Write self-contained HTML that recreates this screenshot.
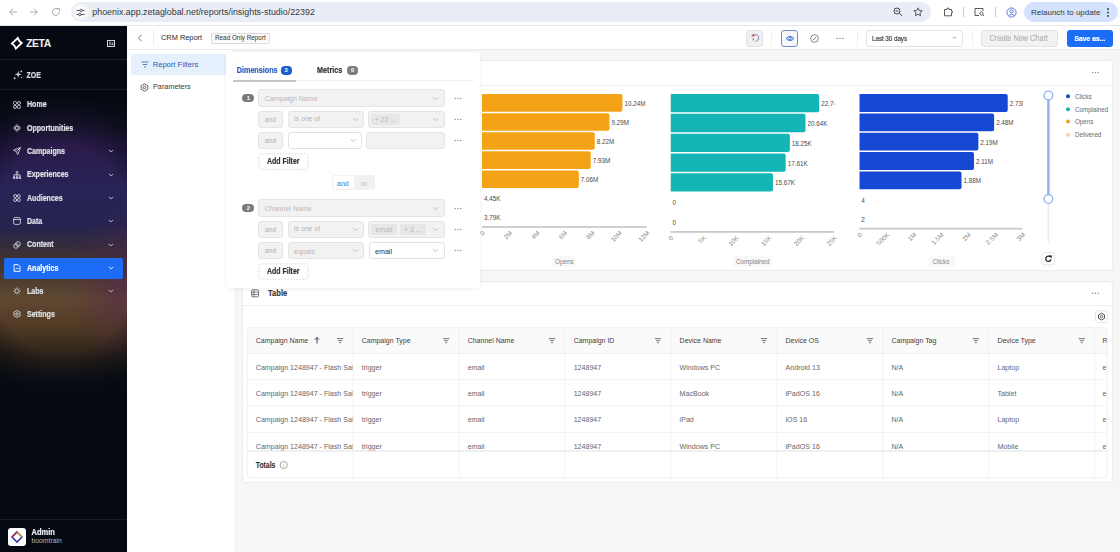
<!DOCTYPE html>
<html><head><meta charset="utf-8"><style>
*{box-sizing:border-box;margin:0;padding:0}
html,body{width:1120px;height:552px;overflow:hidden;background:#f6f6f7;font-family:"Liberation Sans",sans-serif;color:#333}
.a{position:absolute}
.t{position:absolute;white-space:nowrap;line-height:1}
</style></head><body>
<div class="a" style="left:0;top:0;width:1120px;height:26px;background:#fff;border-bottom:1px solid #e6e6e6"></div>
<div class="a" style="left:71px;top:2px;width:860px;height:20px;background:#e9eef6;border-radius:10px;"></div>
<svg class="a" style="left:8px;top:7px" width="10" height="10" viewBox="0 0 10 10"><path d="M9 5H1.8M5 1.6L1.6 5L5 8.4" fill="none" stroke="#a7aaae" stroke-width="1"/></svg>
<svg class="a" style="left:29px;top:7px" width="10" height="10" viewBox="0 0 10 10"><path d="M1 5H8.2M5 1.6L8.4 5L5 8.4" fill="none" stroke="#a7aaae" stroke-width="1"/></svg>
<svg class="a" style="left:50.5px;top:7px" width="10" height="10" viewBox="0 0 10 10"><path d="M8.2 5.2A3.4 3.4 0 1 1 7.1 2.4" fill="none" stroke="#a7aaae" stroke-width="1"/><path d="M5.6 1.6H8.4V4.4" fill="none" stroke="#a7aaae" stroke-width="1"/></svg>
<div class="a" style="left:72.5px;top:4px;width:16px;height:16px;background:#f5f7fb;border-radius:8px;"></div>
<svg class="a" style="left:76px;top:7.5px" width="9" height="9" viewBox="0 0 9 9"><path d="M0.5 2.5H4M6.5 2.5H8.5M0.5 6.5H2.5M5 6.5H8.5" stroke="#474747" stroke-width="0.9"/><circle cx="5.2" cy="2.5" r="1.2" fill="none" stroke="#474747" stroke-width="0.9"/><circle cx="3.8" cy="6.5" r="1.2" fill="none" stroke="#474747" stroke-width="0.9"/></svg>
<div class="t" style="left:92.3px;top:7.75px;font-size:8.9px;color:#363636;">phoenix.app.zetaglobal.net/reports/insights-studio/22392</div>
<svg class="a" style="left:893px;top:7px" width="10" height="10" viewBox="0 0 10 10"><circle cx="4" cy="4" r="3" fill="none" stroke="#474747" stroke-width="1"/><path d="M6.2 6.2L9 9M2.6 4h2.8" stroke="#474747" stroke-width="1"/></svg>
<svg class="a" style="left:913px;top:6.5px" width="10" height="10" viewBox="0 0 10 10"><path d="M5 0.8L6.2 3.6L9.2 3.8L6.9 5.8L7.6 8.8L5 7.2L2.4 8.8L3.1 5.8L0.8 3.8L3.8 3.6Z" fill="none" stroke="#474747" stroke-width="0.9"/></svg>
<svg class="a" style="left:943px;top:7px" width="10" height="10" viewBox="0 0 10 10"><path d="M1.5 2.5H4V1.2H6V2.5H8.5V4.2H9.3V6H8.5V8.8H1.5Z" fill="none" stroke="#474747" stroke-width="0.9"/></svg>
<div class="a" style="left:963px;top:7px;width:1px;height:10px;background:#c7c9cc;border-radius:0px;"></div>
<svg class="a" style="left:974px;top:7px" width="11" height="10" viewBox="0 0 11 10"><path d="M1 1.5H9V4M1 1.5V8.5H5" fill="none" stroke="#474747" stroke-width="0.9"/><circle cx="7.5" cy="6.5" r="1.6" fill="none" stroke="#474747" stroke-width="0.9"/><path d="M8.6 7.6L10 9" stroke="#474747" stroke-width="0.9"/></svg>
<div class="a" style="left:995px;top:7px;width:1px;height:10px;background:#c7c9cc;border-radius:0px;"></div>
<svg class="a" style="left:1006px;top:6.5px" width="11" height="11" viewBox="0 0 11 11"><circle cx="5.5" cy="5.5" r="4.6" fill="none" stroke="#4c6fd0" stroke-width="0.9"/><circle cx="5.5" cy="4.3" r="1.6" fill="none" stroke="#4c6fd0" stroke-width="0.9"/><path d="M2.6 8.6Q5.5 5.8 8.4 8.6" fill="none" stroke="#4c6fd0" stroke-width="0.9"/></svg>
<div class="a" style="left:1024px;top:2px;width:94px;height:19.5px;background:#d3e3fd;border-radius:10px;"></div>
<div class="t" style="left:1031px;top:8.6px;font-size:8px;color:#3a3a3a;">Relaunch to update</div>
<svg class="a" style="left:1106px;top:6.5px" width="4" height="11" viewBox="0 0 4 11"><circle cx="2" cy="2" r="0.9" fill="#333"/><circle cx="2" cy="5.5" r="0.9" fill="#333"/><circle cx="2" cy="9" r="0.9" fill="#333"/></svg>
<div class="a" style="left:0;top:26px;width:127px;height:526px;background:#050a12;overflow:hidden">
<div class="a" style="left:0;top:74px;width:127px;height:290px;background:linear-gradient(to bottom, #0d0f1c 0px, #1c1530 20px, #2b1b4a 45px, #282457 90px, #25234f 125px, #3e3330 160px, #604832 200px, #4f3a23 228px, #2c2219 255px, #0a0d15 285px);-webkit-mask-image:radial-gradient(ellipse 125px 170px at 62px 150px, #000 62%, rgba(0,0,0,0) 100%);mask-image:radial-gradient(ellipse 125px 170px at 62px 150px, #000 62%, rgba(0,0,0,0) 100%)"></div>
<div class="a" style="left:0;top:74px;width:127px;height:290px;background:radial-gradient(ellipse 55px 80px at 125px 185px, rgba(85,35,80,0.55), rgba(85,35,80,0) 100%)"></div>
<div class="a" style="left:0px;top:33px;width:127px;height:1px;background:#17202c;border-radius:0px;"></div>
<div class="a" style="left:0px;top:63px;width:127px;height:1px;background:#161e2c;border-radius:0px;"></div>
<div class="a" style="left:0px;top:493px;width:127px;height:1px;background:#161c26;border-radius:0px;"></div>
<svg class="a" style="left:9px;top:9px" width="16" height="16" viewBox="0 0 16 16"><path d="M8.8 3.1 Q9.8 6.5 12.7 8.05 L6.9 13.6 Q5.9 10.2 2.95 8.5 Z" fill="none" stroke="#fff" stroke-width="1.9" stroke-linejoin="miter"/></svg>
<div class="t" style="left:26px;top:12.51px;font-size:10.4px;color:#f2f2f2;font-weight:bold;letter-spacing:-0.4px;">ZETA</div>
<svg class="a" style="left:107px;top:14px" width="8" height="7" viewBox="0 0 8 7"><rect x="0.5" y="0.5" width="7" height="6" fill="none" stroke="#cfd2d8" stroke-width="1"/><rect x="2.5" y="1.5" width="1" height="4" fill="#cfd2d8"/><rect x="4.5" y="2.5" width="2" height="1" fill="#cfd2d8"/><rect x="4.5" y="4" width="2" height="1" fill="#cfd2d8"/></svg>
<svg class="a" style="left:12.5px;top:44px" width="10" height="10" viewBox="0 0 10 10"><g fill="#c9ccd2"><path d="M5.2 0.8 L6 3.6 L8.8 4.4 L6 5.2 L5.2 8 L4.4 5.2 L1.6 4.4 L4.4 3.6Z"/><circle cx="8.3" cy="1.4" r="0.9"/><circle cx="1.6" cy="8.2" r="1"/><circle cx="8.4" cy="7.6" r="0.7"/></g></svg>
<div class="t" style="left:26.6px;top:45.51px;font-size:7px;color:#d8dade;font-weight:bold;transform:scaleY(1.18);transform-origin:0 3.29px;-webkit-text-stroke:0.18px #d8dade;">ZOE</div>
<svg class="a" style="left:13px;top:74.5px" width="8" height="8" viewBox="0 0 8 8"><g fill="none" stroke="#d0d3d8" stroke-width="0.9"><rect x="0.6" y="0.6" width="2.9" height="2.9" rx="0.8"/><circle cx="6" cy="2" r="1.5"/><circle cx="2" cy="6" r="1.5"/><rect x="4.5" y="4.5" width="2.9" height="2.9" rx="0.8"/></g></svg>
<div class="t" style="left:27px;top:75.39px;font-size:7.05px;color:#e0e2e6;font-weight:bold;transform:scaleY(1.18);transform-origin:0 3.31px;-webkit-text-stroke:0.18px #e0e2e6;">Home</div>
<svg class="a" style="left:13px;top:98px" width="8" height="8" viewBox="0 0 8 8"><g fill="none" stroke="#d0d3d8" stroke-width="0.9"><path d="M4 0.5L7.5 4L4 7.5L0.5 4Z"/><circle cx="4" cy="4" r="1.6"/></g></svg>
<div class="t" style="left:27px;top:98.89px;font-size:7.05px;color:#e0e2e6;font-weight:bold;transform:scaleY(1.18);transform-origin:0 3.31px;-webkit-text-stroke:0.18px #e0e2e6;">Opportunities</div>
<svg class="a" style="left:13px;top:121px" width="8" height="8" viewBox="0 0 8 8"><g fill="none" stroke="#d0d3d8" stroke-width="0.9"><path d="M7.5 0.5L0.5 3.2L3.3 4.7L4.8 7.5Z M7.5 0.5L3.3 4.7"/></g></svg>
<div class="t" style="left:27px;top:121.89px;font-size:7.05px;color:#e0e2e6;font-weight:bold;transform:scaleY(1.18);transform-origin:0 3.31px;-webkit-text-stroke:0.18px #e0e2e6;">Campaigns</div>
<svg class="a" style="left:107.5px;top:123.3px" width="6" height="4" viewBox="0 0 6 4"><path d="M0.8 1 L3 2.8 L5.2 1" fill="none" stroke="#b4b8c0" stroke-width="0.95"/></svg>
<svg class="a" style="left:13px;top:144.5px" width="8" height="8" viewBox="0 0 8 8"><g fill="none" stroke="#d0d3d8" stroke-width="0.9"><circle cx="4" cy="1.2" r="0.9"/><path d="M4 2.1V3.8M1 6V3.8H7V6M4 3.8V6"/><rect x="0.3" y="6" width="1.4" height="1.4"/><rect x="3.3" y="6" width="1.4" height="1.4"/><rect x="6.3" y="6" width="1.4" height="1.4"/></g></svg>
<div class="t" style="left:27px;top:145.39px;font-size:7.05px;color:#e0e2e6;font-weight:bold;transform:scaleY(1.18);transform-origin:0 3.31px;-webkit-text-stroke:0.18px #e0e2e6;">Experiences</div>
<svg class="a" style="left:107.5px;top:146.8px" width="6" height="4" viewBox="0 0 6 4"><path d="M0.8 1 L3 2.8 L5.2 1" fill="none" stroke="#b4b8c0" stroke-width="0.95"/></svg>
<svg class="a" style="left:13px;top:168px" width="8" height="8" viewBox="0 0 8 8"><g fill="none" stroke="#d0d3d8" stroke-width="0.9"><circle cx="2.2" cy="2" r="1.5"/><circle cx="5.8" cy="2" r="1.5"/><circle cx="2.2" cy="6" r="1.5"/><circle cx="5.8" cy="6" r="1.5"/></g></svg>
<div class="t" style="left:27px;top:168.89px;font-size:7.05px;color:#e0e2e6;font-weight:bold;transform:scaleY(1.18);transform-origin:0 3.31px;-webkit-text-stroke:0.18px #e0e2e6;">Audiences</div>
<svg class="a" style="left:107.5px;top:170.3px" width="6" height="4" viewBox="0 0 6 4"><path d="M0.8 1 L3 2.8 L5.2 1" fill="none" stroke="#b4b8c0" stroke-width="0.95"/></svg>
<svg class="a" style="left:13px;top:191px" width="8" height="8" viewBox="0 0 8 8"><g fill="none" stroke="#d0d3d8" stroke-width="0.9"><rect x="0.6" y="0.6" width="6.8" height="6.8" rx="1.6"/><path d="M0.6 2.6H7.4"/></g></svg>
<div class="t" style="left:27px;top:191.89px;font-size:7.05px;color:#e0e2e6;font-weight:bold;transform:scaleY(1.18);transform-origin:0 3.31px;-webkit-text-stroke:0.18px #e0e2e6;">Data</div>
<svg class="a" style="left:107.5px;top:193.3px" width="6" height="4" viewBox="0 0 6 4"><path d="M0.8 1 L3 2.8 L5.2 1" fill="none" stroke="#b4b8c0" stroke-width="0.95"/></svg>
<svg class="a" style="left:13px;top:214.5px" width="8" height="8" viewBox="0 0 8 8"><g fill="none" stroke="#d0d3d8" stroke-width="0.9"><circle cx="5" cy="3" r="2.3"/><circle cx="3" cy="5" r="2.3"/></g></svg>
<div class="t" style="left:27px;top:215.39px;font-size:7.05px;color:#e0e2e6;font-weight:bold;transform:scaleY(1.18);transform-origin:0 3.31px;-webkit-text-stroke:0.18px #e0e2e6;">Content</div>
<svg class="a" style="left:107.5px;top:216.8px" width="6" height="4" viewBox="0 0 6 4"><path d="M0.8 1 L3 2.8 L5.2 1" fill="none" stroke="#b4b8c0" stroke-width="0.95"/></svg>
<div class="a" style="left:4px;top:231.5px;width:119px;height:21px;background:#1d6cf5;border-radius:2px;"></div>
<svg class="a" style="left:13px;top:237.8px" width="8" height="8" viewBox="0 0 8 8"><g fill="none" stroke="#ffffff" stroke-width="0.9"><path d="M1 0.6H5L7 2.6V7.4H1Z"/><path d="M2.5 5.5L3.8 4.2L4.6 5L5.6 3.8"/></g></svg>
<div class="t" style="left:27px;top:238.69px;font-size:7.05px;color:#ffffff;font-weight:bold;transform:scaleY(1.18);transform-origin:0 3.31px;-webkit-text-stroke:0.18px #ffffff;">Analytics</div>
<svg class="a" style="left:107.5px;top:240.1px" width="6" height="4" viewBox="0 0 6 4"><path d="M0.8 1 L3 2.8 L5.2 1" fill="none" stroke="#e8eefc" stroke-width="0.95"/></svg>
<svg class="a" style="left:13px;top:261px" width="8" height="8" viewBox="0 0 8 8"><g fill="none" stroke="#d0d3d8" stroke-width="0.9"><path d="M4 0.5V3M4 5V7.5M0.5 4H3M5 4H7.5M1.6 1.6L3 3M5 5L6.4 6.4M6.4 1.6L5 3M3 5L1.6 6.4"/></g></svg>
<div class="t" style="left:27px;top:261.89px;font-size:7.05px;color:#e0e2e6;font-weight:bold;transform:scaleY(1.18);transform-origin:0 3.31px;-webkit-text-stroke:0.18px #e0e2e6;">Labs</div>
<svg class="a" style="left:107.5px;top:263.3px" width="6" height="4" viewBox="0 0 6 4"><path d="M0.8 1 L3 2.8 L5.2 1" fill="none" stroke="#b4b8c0" stroke-width="0.95"/></svg>
<svg class="a" style="left:13px;top:284.2px" width="8" height="8" viewBox="0 0 8 8"><g fill="none" stroke="#d0d3d8" stroke-width="0.9"><path d="M4 0.5L7.1 2.2V5.8L4 7.5L0.9 5.8V2.2Z"/><circle cx="4" cy="4" r="1.3"/></g></svg>
<div class="t" style="left:27px;top:285.09px;font-size:7.05px;color:#e0e2e6;font-weight:bold;transform:scaleY(1.18);transform-origin:0 3.31px;-webkit-text-stroke:0.18px #e0e2e6;">Settings</div>
<div class="a" style="left:8px;top:502px;width:17.5px;height:17.5px;background:#fff;border-radius:3px;"></div>
<svg class="a" style="left:10px;top:504px" width="14" height="14" viewBox="0 0 14 14"><path d="M7 2 L12 7 L7 12 L2 7 Z" fill="none" stroke="#2a3ea8" stroke-width="1.6"/><path d="M7 2 L12 7" stroke="#e0a030" stroke-width="1.6"/><path d="M2 7 L7 2" stroke="#c03060" stroke-width="1.6"/></svg>
<div class="t" style="left:31.5px;top:502.98px;font-size:7.5px;color:#eef0f3;font-weight:bold;transform:scaleY(1.18);transform-origin:0 3.52px;-webkit-text-stroke:0.18px #eef0f3;">Admin</div>
<div class="t" style="left:31.5px;top:511.8px;font-size:6.8px;color:#aeb3bb;">boomtrain</div>
</div>
<div class="a" style="left:127px;top:26px;width:993px;height:24px;background:#fff;border-bottom:1px solid #ececec"></div>
<svg class="a" style="left:137px;top:34px" width="6" height="8" viewBox="0 0 6 8"><path d="M4.5 0.8 L1.5 4 L4.5 7.2" fill="none" stroke="#666" stroke-width="0.9"/></svg>
<div class="a" style="left:152.5px;top:30px;width:1px;height:16px;background:#ececec;border-radius:0px;"></div>
<div class="t" style="left:161px;top:34.22px;font-size:7.4px;color:#2a2a2a;">CRM Report</div>
<div class="a" style="left:211px;top:32.6px;width:59px;height:11px;background:#fafafa;border:1px solid #dcdcdc;border-radius:2px;"></div>
<div class="t" style="left:215px;top:35.32px;font-size:6.35px;color:#333;">Read Only Report</div>
<div class="a" style="left:746px;top:30px;width:17px;height:16.5px;background:#f1f1f2;border:1px solid #e2e2e2;border-radius:3px;"></div>
<svg class="a" style="left:748px;top:31px" width="14" height="14" viewBox="0 0 14 14"><path d="M6.5 3.6 Q10.8 3.4 10.6 7.2 Q10.4 9.6 7.6 10.6" fill="none" stroke="#6a7fae" stroke-width="0.95"/><path d="M5.2 3.6 L5.2 10.2" stroke="#c8386a" stroke-width="1" stroke-dasharray="2.2 1.6"/><path d="M3.6 5.2 L5.2 3.4 L6.8 5.2" fill="none" stroke="#c8386a" stroke-width="1"/></svg>
<div class="a" style="left:771px;top:30px;width:1px;height:16px;background:#efefef;border-radius:0px;"></div>
<div class="a" style="left:781px;top:30px;width:16.5px;height:16.5px;background:#f7f9fd;border:1px solid #6d8cc8;border-radius:3px;"></div>
<svg class="a" style="left:784.5px;top:35px" width="10" height="7" viewBox="0 0 10 7"><path d="M1 3.5 Q5 -0.6 9 3.5 Q5 7.6 1 3.5Z" fill="none" stroke="#3f70cf" stroke-width="1"/><circle cx="5" cy="3.5" r="1.3" fill="none" stroke="#3f70cf" stroke-width="0.9"/></svg>
<svg class="a" style="left:810px;top:34px" width="9" height="9" viewBox="0 0 9 9"><circle cx="4.5" cy="4.5" r="3.8" fill="none" stroke="#777" stroke-width="0.9"/><path d="M3 6 L6 3" stroke="#777" stroke-width="0.9"/></svg>
<svg class="a" style="left:835.8px;top:36.9px" width="8" height="3" viewBox="0 0 8 3"><circle cx="1.1" cy="1.5" r="0.7" fill="#7a7a7a"/><circle cx="4" cy="1.5" r="0.7" fill="#7a7a7a"/><circle cx="6.9" cy="1.5" r="0.7" fill="#7a7a7a"/></svg>
<div class="a" style="left:857px;top:30px;width:1px;height:16px;background:#efefef;border-radius:0px;"></div>
<div class="a" style="left:866px;top:30px;width:97px;height:16.5px;background:#fff;border:1px solid #e2e2e2;border-radius:3px;"></div>
<div class="t" style="left:872px;top:35.59px;font-size:6.4px;color:#333;transform:scaleY(1.15);transform-origin:0 3.01px;letter-spacing:-0.1px;-webkit-text-stroke:0.12px #333;">Last 30 days</div>
<svg class="a" style="left:951.5px;top:36.25px" width="5" height="3.5" viewBox="0 0 5 3.5"><path d="M0.8 1 L2.5 2.3 L4.2 1" fill="none" stroke="#888" stroke-width="0.8"/></svg>
<div class="a" style="left:972px;top:30px;width:1px;height:16px;background:#efefef;border-radius:0px;"></div>
<div class="a" style="left:981px;top:30px;width:77px;height:16.5px;background:#f2f2f3;border:1px solid #e2e2e2;border-radius:3px;"></div>
<div class="t" style="left:989.5px;top:35.17px;font-size:7.3px;color:#b0b0b0;transform:scaleY(1.12);transform-origin:0 3.43px;-webkit-text-stroke:0.12px #b0b0b0;">Create New Chart</div>
<div class="a" style="left:1066.5px;top:30px;width:46.5px;height:16.5px;background:#1b6cf6;border-radius:3px;"></div>
<div class="t" style="left:1074.5px;top:36.2px;font-size:6.8px;color:#fff;font-weight:bold;transform:scaleY(1.18);transform-origin:0 3.2px;-webkit-text-stroke:0.18px #fff;">Save as...</div>
<div class="a" style="left:127px;top:50px;width:107px;height:502px;background:#fff"></div>
<div class="a" style="left:131px;top:54px;width:95px;height:20.5px;background:#e4f0fc;border-radius:2px;"></div>
<svg class="a" style="left:140.5px;top:61px" width="8" height="7" viewBox="0 0 8 7"><path d="M0.5 1h7M1.8 3.5h4.4M3 6h2" stroke="#4a6fb0" stroke-width="0.9"/></svg>
<div class="t" style="left:152.7px;top:60.63px;font-size:7.6px;color:#2459b8;">Report Filters</div>
<svg class="a" style="left:140px;top:82.5px" width="9" height="9" viewBox="0 0 9 9"><path d="M4.5 0.8 L7.8 2.7 L7.8 6.3 L4.5 8.2 L1.2 6.3 L1.2 2.7Z" fill="none" stroke="#555" stroke-width="0.9"/><circle cx="4.5" cy="4.5" r="1.3" fill="none" stroke="#555" stroke-width="0.9"/></svg>
<div class="t" style="left:153px;top:83.47px;font-size:7.3px;color:#3a3a3a;">Parameters</div>
<div class="a" style="left:241px;top:59.5px;width:871.5px;height:211px;background:#fff;border:1px solid #ececec;border-radius:4px;"></div>
<div class="a" style="left:242px;top:281px;width:870.5px;height:201.8px;background:#fff;border:1px solid #ececec;border-radius:4px;"></div>
<svg class="a" style="left:0;top:0" width="1120" height="552" viewBox="0 0 1120 552" font-family="Liberation Sans, sans-serif">
<rect x="241.5" y="85" width="871" height="1" fill="#efefef"/>
<circle cx="1092.7" cy="72.6" r="0.7" fill="#777"/>
<circle cx="1095.5" cy="72.6" r="0.7" fill="#777"/>
<circle cx="1098.3" cy="72.6" r="0.7" fill="#777"/>
<clipPath id="c482"><rect x="482" y="85" width="165.1" height="160"/></clipPath>
<g clip-path="url(#c482)">
<path d="M482 94.05 h138.46 q2 0 2 2 v13.6 q0 2 -2 2 h-138.46 z" fill="#f5a316"/>
<text transform="translate(624.46,105.85) scale(1,1.05)" font-size="6.3" fill="#4a4a4a">10.24M</text>
<path d="M482 113.15 h125.43 q2 0 2 2 v13.6 q0 2 -2 2 h-125.43 z" fill="#f5a316"/>
<text transform="translate(611.43,124.95) scale(1,1.05)" font-size="6.3" fill="#4a4a4a">9.29M</text>
<path d="M482 132.25 h110.75 q2 0 2 2 v13.6 q0 2 -2 2 h-110.75 z" fill="#f5a316"/>
<text transform="translate(596.75,144.05) scale(1,1.05)" font-size="6.3" fill="#4a4a4a">8.22M</text>
<path d="M482 151.35 h106.77 q2 0 2 2 v13.6 q0 2 -2 2 h-106.77 z" fill="#f5a316"/>
<text transform="translate(592.77,163.15) scale(1,1.05)" font-size="6.3" fill="#4a4a4a">7.93M</text>
<path d="M482 170.45 h94.84 q2 0 2 2 v13.6 q0 2 -2 2 h-94.84 z" fill="#f5a316"/>
<text transform="translate(580.84,182.25) scale(1,1.05)" font-size="6.3" fill="#4a4a4a">7.06M</text>
</g>
<text transform="translate(484,201.35) scale(1,1.05)" font-size="6.3" fill="#4a4a4a">4.45K</text>
<text transform="translate(484,220.45) scale(1,1.05)" font-size="6.3" fill="#4a4a4a">3.79K</text>
<rect x="482" y="226.1" width="164.6" height="1.8" fill="#cacaca"/>
<text transform="translate(485.2,233.5) rotate(-45)" text-anchor="end" font-size="6.4" fill="#8c8c8c">0</text>
<text transform="translate(512.63,233.5) rotate(-45)" text-anchor="end" font-size="6.4" fill="#8c8c8c">2M</text>
<text transform="translate(540.07,233.5) rotate(-45)" text-anchor="end" font-size="6.4" fill="#8c8c8c">4M</text>
<text transform="translate(567.5,233.5) rotate(-45)" text-anchor="end" font-size="6.4" fill="#8c8c8c">6M</text>
<text transform="translate(594.93,233.5) rotate(-45)" text-anchor="end" font-size="6.4" fill="#8c8c8c">8M</text>
<text transform="translate(622.37,233.5) rotate(-45)" text-anchor="end" font-size="6.4" fill="#8c8c8c">10M</text>
<text transform="translate(649.8,233.5) rotate(-45)" text-anchor="end" font-size="6.4" fill="#8c8c8c">12M</text>
<rect x="552" y="255.5" width="22.5" height="11" fill="#f8f8f8"/>
<text transform="translate(555,263.8) scale(1,1.08)" font-size="6.3" fill="#858585">Opens</text>
<clipPath id="c670"><rect x="670.5" y="85" width="164" height="160"/></clipPath>
<g clip-path="url(#c670)">
<path d="M670.5 94.05 h146.72 q2 0 2 2 v14.3 q0 2 -2 2 h-146.72 z" fill="#14b6b5"/>
<text transform="translate(821.22,106.2) scale(1,1.05)" font-size="6.3" fill="#4a4a4a">22.74K</text>
<path d="M670.5 113.85 h132.99 q2 0 2 2 v14.3 q0 2 -2 2 h-132.99 z" fill="#14b6b5"/>
<text transform="translate(807.49,126) scale(1,1.05)" font-size="6.3" fill="#4a4a4a">20.64K</text>
<path d="M670.5 133.65 h117.36 q2 0 2 2 v14.3 q0 2 -2 2 h-117.36 z" fill="#14b6b5"/>
<text transform="translate(791.86,145.8) scale(1,1.05)" font-size="6.3" fill="#4a4a4a">18.25K</text>
<path d="M670.5 153.45 h113.17 q2 0 2 2 v14.3 q0 2 -2 2 h-113.17 z" fill="#14b6b5"/>
<text transform="translate(787.67,165.6) scale(1,1.05)" font-size="6.3" fill="#4a4a4a">17.61K</text>
<path d="M670.5 173.25 h100.48 q2 0 2 2 v14.3 q0 2 -2 2 h-100.48 z" fill="#14b6b5"/>
<text transform="translate(774.98,185.4) scale(1,1.05)" font-size="6.3" fill="#4a4a4a">15.67K</text>
</g>
<text transform="translate(672.5,205.2) scale(1,1.05)" font-size="6.3" fill="#4a4a4a">0</text>
<text transform="translate(672.5,225) scale(1,1.05)" font-size="6.3" fill="#4a4a4a">0</text>
<rect x="670.5" y="231" width="163.5" height="1.8" fill="#cacaca"/>
<text transform="translate(673.7,238.4) rotate(-45)" text-anchor="end" font-size="6.4" fill="#8c8c8c">0</text>
<text transform="translate(706.4,238.4) rotate(-45)" text-anchor="end" font-size="6.4" fill="#8c8c8c">5K</text>
<text transform="translate(739.1,238.4) rotate(-45)" text-anchor="end" font-size="6.4" fill="#8c8c8c">10K</text>
<text transform="translate(771.8,238.4) rotate(-45)" text-anchor="end" font-size="6.4" fill="#8c8c8c">15K</text>
<text transform="translate(804.5,238.4) rotate(-45)" text-anchor="end" font-size="6.4" fill="#8c8c8c">20K</text>
<text transform="translate(837.2,238.4) rotate(-45)" text-anchor="end" font-size="6.4" fill="#8c8c8c">25K</text>
<rect x="733" y="255.5" width="39" height="11" fill="#f8f8f8"/>
<text transform="translate(736,263.8) scale(1,1.08)" font-size="6.3" fill="#858585">Complained</text>
<clipPath id="c859"><rect x="859.3" y="85" width="163.6" height="160"/></clipPath>
<g clip-path="url(#c859)">
<path d="M859.3 94.05 h146.42 q2 0 2 2 v13.84 q0 2 -2 2 h-146.42 z" fill="#1549d4"/>
<text transform="translate(1009.72,105.97) scale(1,1.05)" font-size="6.3" fill="#4a4a4a">2.73M</text>
<path d="M859.3 113.39 h132.83 q2 0 2 2 v13.84 q0 2 -2 2 h-132.83 z" fill="#1549d4"/>
<text transform="translate(996.13,125.31) scale(1,1.05)" font-size="6.3" fill="#4a4a4a">2.48M</text>
<path d="M859.3 132.74 h117.06 q2 0 2 2 v13.84 q0 2 -2 2 h-117.06 z" fill="#1549d4"/>
<text transform="translate(980.36,144.66) scale(1,1.05)" font-size="6.3" fill="#4a4a4a">2.19M</text>
<path d="M859.3 152.08 h112.71 q2 0 2 2 v13.84 q0 2 -2 2 h-112.71 z" fill="#1549d4"/>
<text transform="translate(976.01,164) scale(1,1.05)" font-size="6.3" fill="#4a4a4a">2.11M</text>
<path d="M859.3 171.42 h100.21 q2 0 2 2 v13.84 q0 2 -2 2 h-100.21 z" fill="#1549d4"/>
<text transform="translate(963.51,183.34) scale(1,1.05)" font-size="6.3" fill="#4a4a4a">1.88M</text>
</g>
<text transform="translate(861.3,202.69) scale(1,1.05)" font-size="6.3" fill="#4a4a4a">4</text>
<text transform="translate(861.3,222.03) scale(1,1.05)" font-size="6.3" fill="#4a4a4a">2</text>
<rect x="859.3" y="227.8" width="163.1" height="1.8" fill="#cacaca"/>
<text transform="translate(862.5,235.2) rotate(-45)" text-anchor="end" font-size="6.4" fill="#8c8c8c">0</text>
<text transform="translate(889.68,235.2) rotate(-45)" text-anchor="end" font-size="6.4" fill="#8c8c8c">500K</text>
<text transform="translate(916.87,235.2) rotate(-45)" text-anchor="end" font-size="6.4" fill="#8c8c8c">1M</text>
<text transform="translate(944.05,235.2) rotate(-45)" text-anchor="end" font-size="6.4" fill="#8c8c8c">1.5M</text>
<text transform="translate(971.23,235.2) rotate(-45)" text-anchor="end" font-size="6.4" fill="#8c8c8c">2M</text>
<text transform="translate(998.42,235.2) rotate(-45)" text-anchor="end" font-size="6.4" fill="#8c8c8c">2.5M</text>
<text transform="translate(1025.6,235.2) rotate(-45)" text-anchor="end" font-size="6.4" fill="#8c8c8c">3M</text>
<rect x="929.5" y="255.5" width="25.8" height="11" fill="#f8f8f8"/>
<text transform="translate(932.5,263.8) scale(1,1.08)" font-size="6.3" fill="#858585">Clicks</text>
<rect x="1047.2" y="95.5" width="2.4" height="103.5" fill="#8db2f0"/>
<rect x="1047.6" y="199" width="1.6" height="44" fill="#ececec"/>
<circle cx="1048.4" cy="95.5" r="4.3" fill="#fff" stroke="#8db2f0" stroke-width="1.3"/>
<circle cx="1048.4" cy="199" r="4.3" fill="#fff" stroke="#8db2f0" stroke-width="1.3"/>
<rect x="1041.9" y="252.7" width="12.8" height="12.3" rx="2" fill="#fff" stroke="#dcdcdc" stroke-width="0.8"/>
<path d="M1051.1 259.4 A2.7 2.7 0 1 1 1050.2 256.7" fill="none" stroke="#222" stroke-width="1.25"/><path d="M1048.9 255.2 L1052 255.6 L1051.3 258.6 Z" fill="#222"/>
<circle cx="1068" cy="96.2" r="2" fill="#1549d4"/>
<text transform="translate(1075,98.6) scale(1,1.1)" font-size="6.25" fill="#6a6a6a">Clicks</text>
<circle cx="1068" cy="109.2" r="2" fill="#14b6b5"/>
<text transform="translate(1075,111.6) scale(1,1.1)" font-size="6.25" fill="#6a6a6a">Complained</text>
<circle cx="1068" cy="121.6" r="2" fill="#f0a028"/>
<text transform="translate(1075,124) scale(1,1.1)" font-size="6.25" fill="#6a6a6a">Opens</text>
<circle cx="1068" cy="134.8" r="2" fill="#fad49a"/>
<text transform="translate(1075,137.2) scale(1,1.1)" font-size="6.25" fill="#6a6a6a">Delivered</text>
<rect x="251.6" y="289.8" width="7" height="7" rx="1" fill="none" stroke="#666" stroke-width="0.9"/><path d="M251.6 292.2h7M251.6 294.5h7M254 289.8v7" stroke="#666" stroke-width="0.8"/>
<text transform="translate(268,295.9) scale(1,1.2)" font-size="7.6" fill="#333" font-weight="bold" stroke="#333" stroke-width="0.1">Table</text>
<circle cx="1092.6" cy="293.2" r="0.7" fill="#888"/>
<circle cx="1095.4" cy="293.2" r="0.7" fill="#888"/>
<circle cx="1098.2" cy="293.2" r="0.7" fill="#888"/>
<rect x="242.5" y="305" width="870" height="1" fill="#efefef"/>
<rect x="1095.6" y="310.8" width="11.8" height="11.6" rx="2" fill="#fff" stroke="#dedede" stroke-width="0.8"/>
<path d="M1101.5 313.2 L1104.5 314.9 L1104.5 318.3 L1101.5 320 L1098.5 318.3 L1098.5 314.9Z" fill="none" stroke="#444" stroke-width="0.9"/><circle cx="1101.5" cy="316.6" r="1.2" fill="none" stroke="#444" stroke-width="0.8"/>
<defs><clipPath id="tb"><rect x="247.2" y="327.6" width="860" height="150.2" rx="4"/></clipPath><clipPath id="body"><rect x="247.2" y="353.5" width="860" height="97.2"/></clipPath></defs>
<g clip-path="url(#tb)">
<rect x="247.2" y="327.6" width="860" height="25.9" fill="#fafafa"/>
<text transform="translate(255.8,343.1) scale(1,1.08)" font-size="7" fill="#3d3d3d">Campaign Name</text>
<path d="M336.95 338.6h6.4M338.05 340.6h4.2M339.15 342.6h2" stroke="#555" stroke-width="0.8"/>
<text transform="translate(361.75,343.1) scale(1,1.08)" font-size="7" fill="#3d3d3d">Campaign Type</text>
<path d="M442.9 338.6h6.4M444 340.6h4.2M445.1 342.6h2" stroke="#555" stroke-width="0.8"/>
<text transform="translate(467.7,343.1) scale(1,1.08)" font-size="7" fill="#3d3d3d">Channel Name</text>
<path d="M548.85 338.6h6.4M549.95 340.6h4.2M551.05 342.6h2" stroke="#555" stroke-width="0.8"/>
<text transform="translate(573.65,343.1) scale(1,1.08)" font-size="7" fill="#3d3d3d">Campaign ID</text>
<path d="M654.8 338.6h6.4M655.9 340.6h4.2M657 342.6h2" stroke="#555" stroke-width="0.8"/>
<text transform="translate(679.6,343.1) scale(1,1.08)" font-size="7" fill="#3d3d3d">Device Name</text>
<path d="M760.75 338.6h6.4M761.85 340.6h4.2M762.95 342.6h2" stroke="#555" stroke-width="0.8"/>
<text transform="translate(785.55,343.1) scale(1,1.08)" font-size="7" fill="#3d3d3d">Device OS</text>
<path d="M866.7 338.6h6.4M867.8 340.6h4.2M868.9 342.6h2" stroke="#555" stroke-width="0.8"/>
<text transform="translate(891.5,343.1) scale(1,1.08)" font-size="7" fill="#3d3d3d">Campaign Tag</text>
<path d="M972.65 338.6h6.4M973.75 340.6h4.2M974.85 342.6h2" stroke="#555" stroke-width="0.8"/>
<text transform="translate(997.45,343.1) scale(1,1.08)" font-size="7" fill="#3d3d3d">Device Type</text>
<path d="M1078.6 338.6h6.4M1079.7 340.6h4.2M1080.8 342.6h2" stroke="#555" stroke-width="0.8"/>
<text transform="translate(1102.4,343.1) scale(1,1.08)" font-size="7" fill="#3d3d3d">R</text>
<path d="M317 343.5 V337.6 M314.8 339.8 L317 337.4 L319.2 339.8" fill="none" stroke="#333" stroke-width="0.9"/>
<rect x="352.65" y="327.6" width="0.8" height="150.2" fill="#f1f1f1"/>
<rect x="458.6" y="327.6" width="0.8" height="150.2" fill="#f1f1f1"/>
<rect x="564.55" y="327.6" width="0.8" height="150.2" fill="#f1f1f1"/>
<rect x="670.5" y="327.6" width="0.8" height="150.2" fill="#f1f1f1"/>
<rect x="776.45" y="327.6" width="0.8" height="150.2" fill="#f1f1f1"/>
<rect x="882.4" y="327.6" width="0.8" height="150.2" fill="#f1f1f1"/>
<rect x="988.35" y="327.6" width="0.8" height="150.2" fill="#f1f1f1"/>
<rect x="1094.3" y="327.6" width="0.8" height="150.2" fill="#f1f1f1"/>
<rect x="247.2" y="353.2" width="860" height="0.8" fill="#eeeeee"/>
<g clip-path="url(#body)">
<svg x="247.2" y="353.3" width="105.6" height="26.4"><text transform="translate(8.6,16.3) scale(1,1.08)" font-size="7.1" fill="#666">Campaign 1248947 - Flash Sale</text></svg>
<svg x="353.15" y="353.3" width="105.6" height="26.4"><text transform="translate(8.6,16.3) scale(1,1.08)" font-size="7.1" fill="#666">trigger</text></svg>
<svg x="459.1" y="353.3" width="105.6" height="26.4"><text transform="translate(8.6,16.3) scale(1,1.08)" font-size="7.1" fill="#666">email</text></svg>
<svg x="565.05" y="353.3" width="105.6" height="26.4"><text transform="translate(8.6,16.3) scale(1,1.08)" font-size="7.1" fill="#666">1248947</text></svg>
<svg x="671" y="353.3" width="105.6" height="26.4"><text transform="translate(8.6,16.3) scale(1,1.08)" font-size="7.1" fill="#666">Windows PC</text></svg>
<svg x="776.95" y="353.3" width="105.6" height="26.4"><text transform="translate(8.6,16.3) scale(1,1.08)" font-size="7.1" fill="#666">Android 13</text></svg>
<svg x="882.9" y="353.3" width="105.6" height="26.4"><text transform="translate(8.6,16.3) scale(1,1.08)" font-size="7.1" fill="#666">N/A</text></svg>
<svg x="988.85" y="353.3" width="105.6" height="26.4"><text transform="translate(8.6,16.3) scale(1,1.08)" font-size="7.1" fill="#666">Laptop</text></svg>
<svg x="1094.8" y="353.3" width="14" height="26.4"><text transform="translate(7.6,16.3) scale(1,1.08)" font-size="7.1" fill="#666">e</text></svg>
<rect x="247.2" y="379.27" width="860" height="0.8" fill="#efefef"/>
<svg x="247.2" y="379.67" width="105.6" height="26.4"><text transform="translate(8.6,16.3) scale(1,1.08)" font-size="7.1" fill="#666">Campaign 1248947 - Flash Sale</text></svg>
<svg x="353.15" y="379.67" width="105.6" height="26.4"><text transform="translate(8.6,16.3) scale(1,1.08)" font-size="7.1" fill="#666">trigger</text></svg>
<svg x="459.1" y="379.67" width="105.6" height="26.4"><text transform="translate(8.6,16.3) scale(1,1.08)" font-size="7.1" fill="#666">email</text></svg>
<svg x="565.05" y="379.67" width="105.6" height="26.4"><text transform="translate(8.6,16.3) scale(1,1.08)" font-size="7.1" fill="#666">1248947</text></svg>
<svg x="671" y="379.67" width="105.6" height="26.4"><text transform="translate(8.6,16.3) scale(1,1.08)" font-size="7.1" fill="#666">MacBook</text></svg>
<svg x="776.95" y="379.67" width="105.6" height="26.4"><text transform="translate(8.6,16.3) scale(1,1.08)" font-size="7.1" fill="#666">iPadOS 16</text></svg>
<svg x="882.9" y="379.67" width="105.6" height="26.4"><text transform="translate(8.6,16.3) scale(1,1.08)" font-size="7.1" fill="#666">N/A</text></svg>
<svg x="988.85" y="379.67" width="105.6" height="26.4"><text transform="translate(8.6,16.3) scale(1,1.08)" font-size="7.1" fill="#666">Tablet</text></svg>
<svg x="1094.8" y="379.67" width="14" height="26.4"><text transform="translate(7.6,16.3) scale(1,1.08)" font-size="7.1" fill="#666">e</text></svg>
<rect x="247.2" y="405.64" width="860" height="0.8" fill="#efefef"/>
<svg x="247.2" y="406.04" width="105.6" height="26.4"><text transform="translate(8.6,16.3) scale(1,1.08)" font-size="7.1" fill="#666">Campaign 1248947 - Flash Sale</text></svg>
<svg x="353.15" y="406.04" width="105.6" height="26.4"><text transform="translate(8.6,16.3) scale(1,1.08)" font-size="7.1" fill="#666">trigger</text></svg>
<svg x="459.1" y="406.04" width="105.6" height="26.4"><text transform="translate(8.6,16.3) scale(1,1.08)" font-size="7.1" fill="#666">email</text></svg>
<svg x="565.05" y="406.04" width="105.6" height="26.4"><text transform="translate(8.6,16.3) scale(1,1.08)" font-size="7.1" fill="#666">1248947</text></svg>
<svg x="671" y="406.04" width="105.6" height="26.4"><text transform="translate(8.6,16.3) scale(1,1.08)" font-size="7.1" fill="#666">iPad</text></svg>
<svg x="776.95" y="406.04" width="105.6" height="26.4"><text transform="translate(8.6,16.3) scale(1,1.08)" font-size="7.1" fill="#666">iOS 16</text></svg>
<svg x="882.9" y="406.04" width="105.6" height="26.4"><text transform="translate(8.6,16.3) scale(1,1.08)" font-size="7.1" fill="#666">N/A</text></svg>
<svg x="988.85" y="406.04" width="105.6" height="26.4"><text transform="translate(8.6,16.3) scale(1,1.08)" font-size="7.1" fill="#666">Laptop</text></svg>
<svg x="1094.8" y="406.04" width="14" height="26.4"><text transform="translate(7.6,16.3) scale(1,1.08)" font-size="7.1" fill="#666">e</text></svg>
<rect x="247.2" y="432.01" width="860" height="0.8" fill="#efefef"/>
<svg x="247.2" y="432.41" width="105.6" height="26.4"><text transform="translate(8.6,16.3) scale(1,1.08)" font-size="7.1" fill="#666">Campaign 1248947 - Flash Sale</text></svg>
<svg x="353.15" y="432.41" width="105.6" height="26.4"><text transform="translate(8.6,16.3) scale(1,1.08)" font-size="7.1" fill="#666">trigger</text></svg>
<svg x="459.1" y="432.41" width="105.6" height="26.4"><text transform="translate(8.6,16.3) scale(1,1.08)" font-size="7.1" fill="#666">email</text></svg>
<svg x="565.05" y="432.41" width="105.6" height="26.4"><text transform="translate(8.6,16.3) scale(1,1.08)" font-size="7.1" fill="#666">1248947</text></svg>
<svg x="671" y="432.41" width="105.6" height="26.4"><text transform="translate(8.6,16.3) scale(1,1.08)" font-size="7.1" fill="#666">Windows PC</text></svg>
<svg x="776.95" y="432.41" width="105.6" height="26.4"><text transform="translate(8.6,16.3) scale(1,1.08)" font-size="7.1" fill="#666">iPadOS 16</text></svg>
<svg x="882.9" y="432.41" width="105.6" height="26.4"><text transform="translate(8.6,16.3) scale(1,1.08)" font-size="7.1" fill="#666">N/A</text></svg>
<svg x="988.85" y="432.41" width="105.6" height="26.4"><text transform="translate(8.6,16.3) scale(1,1.08)" font-size="7.1" fill="#666">Mobile</text></svg>
<svg x="1094.8" y="432.41" width="14" height="26.4"><text transform="translate(7.6,16.3) scale(1,1.08)" font-size="7.1" fill="#666">e</text></svg>
</g>
<rect x="247.2" y="450.5" width="860" height="0.9" fill="#dcdde2"/>
<text transform="translate(255.8,467.9) scale(1,1.2)" font-size="6.8" fill="#333" font-weight="bold" stroke="#333" stroke-width="0.1">Totals</text>
<circle cx="283.7" cy="465" r="3.6" fill="none" stroke="#8a8a8a" stroke-width="0.75"/><path d="M283.7 464.3v2.6" stroke="#aaa" stroke-width="0.6"/><circle cx="283.7" cy="463.2" r="0.35" fill="#aaa"/>
</g>
<rect x="247.2" y="327.6" width="860" height="150.2" rx="4" fill="none" stroke="#ebebeb" stroke-width="0.8"/>
</svg>
<div class="a" style="left:225.5px;top:52px;width:254.5px;height:235.5px;background:#fff;border-radius:4px;box-shadow:0 1px 5px rgba(0,0,0,0.06),0 0 1px rgba(0,0,0,0.06)"></div>
<div class="t" style="left:236.8px;top:66.62px;font-size:7.2px;color:#2a5fc0;font-weight:bold;transform:scaleY(1.18);transform-origin:0 3.38px;-webkit-text-stroke:0.18px #2a5fc0;">Dimensions</div>
<div class="a" style="left:280.5px;top:66.2px;width:11.1px;height:8.5px;background:#1f5dc9;border-radius:4px;"></div><div class="t" style="left:280.5px;top:67.9px;width:11.1px;text-align:center;font-size:5.6px;font-weight:bold;color:#fff">3</div>
<div class="t" style="left:317px;top:66.62px;font-size:7.2px;color:#333;font-weight:bold;transform:scaleY(1.18);transform-origin:0 3.38px;-webkit-text-stroke:0.18px #333;">Metrics</div>
<div class="a" style="left:347px;top:66.2px;width:11.3px;height:8.5px;background:#7e7e7e;border-radius:4px;"></div><div class="t" style="left:347px;top:67.9px;width:11.3px;text-align:center;font-size:5.6px;font-weight:bold;color:#fff">0</div>
<div class="a" style="left:233px;top:80px;width:241px;height:1px;background:#f0f0f0;border-radius:0px;"></div>
<div class="a" style="left:233px;top:80.3px;width:62.7px;height:1.4px;background:#c4c4c4;border-radius:0px;"></div>
<div class="a" style="left:242.4px;top:94px;width:11.6px;height:8.2px;background:#7a7a7a;border-radius:4px;"></div><div class="t" style="left:242.4px;top:95.7px;width:11.6px;text-align:center;font-size:5.6px;font-weight:bold;color:#fff">1</div>
<div class="a" style="left:258.3px;top:89.4px;width:186.3px;height:17.2px;background:#f2f2f3;border:1px solid #e4e4e6;border-radius:3px;"></div>
<div class="t" style="left:264.7px;top:94.69px;font-size:7.05px;color:#b9b9b9;">Campaign Name</div>
<svg class="a" style="left:431.9px;top:95.5px" width="7" height="5" viewBox="0 0 7 5"><path d="M0.8 1 L3.5 3.8 L6.2 1" fill="none" stroke="#b5b5b5" stroke-width="0.8"/></svg>
<svg class="a" style="left:453.5px;top:96.8px" width="8" height="3" viewBox="0 0 8 3"><circle cx="1.2" cy="1.5" r="0.7" fill="#888"/><circle cx="4" cy="1.5" r="0.7" fill="#888"/><circle cx="6.8" cy="1.5" r="0.7" fill="#888"/></svg>
<div class="a" style="left:258.3px;top:111px;width:24.5px;height:16.5px;background:#f2f2f3;border:1px solid #e4e4e6;border-radius:3px;"></div>
<div class="t" style="left:264.7px;top:116.53px;font-size:6.8px;color:#b0b0b0;">and</div>
<div class="a" style="left:288px;top:111px;width:75.5px;height:16.5px;background:#f2f2f3;border:1px solid #e4e4e6;border-radius:3px;"></div>
<div class="t" style="left:294px;top:116.49px;font-size:6.9px;color:#b5b5b5;">is one of</div>
<svg class="a" style="left:351.5px;top:116.75px" width="7" height="5" viewBox="0 0 7 5"><path d="M0.8 1 L3.5 3.8 L6.2 1" fill="none" stroke="#b5b5b5" stroke-width="0.8"/></svg>
<div class="a" style="left:368px;top:111px;width:76.6px;height:16.5px;background:#f2f2f3;border:1px solid #e4e4e6;border-radius:3px;"></div>
<div class="a" style="left:370.8px;top:113.5px;width:29.1px;height:11.5px;background:#e6e7e6;border-radius:2px;"></div>
<div class="t" style="left:370.8px;top:116.2px;width:29.1px;text-align:center;font-size:7px;color:#b8b8b8">+ 22 ...</div>
<svg class="a" style="left:431.9px;top:116.75px" width="7" height="5" viewBox="0 0 7 5"><path d="M0.8 1 L3.5 3.8 L6.2 1" fill="none" stroke="#b5b5b5" stroke-width="0.8"/></svg>
<svg class="a" style="left:453.5px;top:118px" width="8" height="3" viewBox="0 0 8 3"><circle cx="1.2" cy="1.5" r="0.7" fill="#888"/><circle cx="4" cy="1.5" r="0.7" fill="#888"/><circle cx="6.8" cy="1.5" r="0.7" fill="#888"/></svg>
<div class="a" style="left:258.3px;top:132.2px;width:24.5px;height:16.5px;background:#f2f2f3;border:1px solid #e4e4e6;border-radius:3px;"></div>
<div class="t" style="left:264.7px;top:137.73px;font-size:6.8px;color:#b0b0b0;">and</div>
<div class="a" style="left:288.2px;top:132.2px;width:73.5px;height:16.5px;background:#fff;border:1px solid #e2e2e2;border-radius:3px;"></div>
<svg class="a" style="left:350px;top:137.95px" width="7" height="5" viewBox="0 0 7 5"><path d="M0.8 1 L3.5 3.8 L6.2 1" fill="none" stroke="#b5b5b5" stroke-width="0.8"/></svg>
<div class="a" style="left:366.2px;top:132.2px;width:78.4px;height:16.5px;background:#f2f2f3;border:1px solid #e4e4e6;border-radius:3px;"></div>
<svg class="a" style="left:453.5px;top:139.2px" width="8" height="3" viewBox="0 0 8 3"><circle cx="1.2" cy="1.5" r="0.7" fill="#888"/><circle cx="4" cy="1.5" r="0.7" fill="#888"/><circle cx="6.8" cy="1.5" r="0.7" fill="#888"/></svg>
<svg class="a" style="left:258px;top:152.8px" width="51" height="17.2" viewBox="0 0 51 17.2"><rect x="0.9" y="0.9" width="49.2" height="15.4" rx="3" fill="#fff" stroke="#cfcfcf" stroke-width="0.8" stroke-dasharray="1.6 1.4"/></svg>
<div class="t" style="left:266.9px;top:158.31px;font-size:7px;color:#333;font-weight:bold;transform:scaleY(1.18);transform-origin:0 3.29px;-webkit-text-stroke:0.18px #333;">Add Filter</div>
<div class="a" style="left:331.6px;top:174.5px;width:43.4px;height:15.8px;background:#f1f1f1;border-radius:3px;"></div>
<div class="a" style="left:331.6px;top:174.5px;width:23.8px;height:15.8px;background:#fff;border:1px solid #f1f1f1;border-radius:3px;"></div>
<div class="t" style="left:337px;top:179.6px;font-size:7px;color:#3a6fd0;">and</div>
<div class="t" style="left:361px;top:179.6px;font-size:7px;color:#c0c0c0;">or</div>
<div class="a" style="left:242.4px;top:204px;width:11.6px;height:8.2px;background:#7a7a7a;border-radius:4px;"></div><div class="t" style="left:242.4px;top:205.7px;width:11.6px;text-align:center;font-size:5.6px;font-weight:bold;color:#fff">2</div>
<div class="a" style="left:258.3px;top:199.4px;width:186.3px;height:17.2px;background:#f2f2f3;border:1px solid #e4e4e6;border-radius:3px;"></div>
<div class="t" style="left:264.7px;top:204.69px;font-size:7.05px;color:#b9b9b9;">Channel Name</div>
<svg class="a" style="left:431.9px;top:205.5px" width="7" height="5" viewBox="0 0 7 5"><path d="M0.8 1 L3.5 3.8 L6.2 1" fill="none" stroke="#b5b5b5" stroke-width="0.8"/></svg>
<svg class="a" style="left:453.5px;top:206.8px" width="8" height="3" viewBox="0 0 8 3"><circle cx="1.2" cy="1.5" r="0.7" fill="#888"/><circle cx="4" cy="1.5" r="0.7" fill="#888"/><circle cx="6.8" cy="1.5" r="0.7" fill="#888"/></svg>
<div class="a" style="left:258.3px;top:221px;width:24.5px;height:16.5px;background:#f2f2f3;border:1px solid #e4e4e6;border-radius:3px;"></div>
<div class="t" style="left:264.7px;top:226.53px;font-size:6.8px;color:#b0b0b0;">and</div>
<div class="a" style="left:288px;top:221px;width:75.5px;height:16.5px;background:#f2f2f3;border:1px solid #e4e4e6;border-radius:3px;"></div>
<div class="t" style="left:294px;top:226.49px;font-size:6.9px;color:#b5b5b5;">is one of</div>
<svg class="a" style="left:351.5px;top:226.75px" width="7" height="5" viewBox="0 0 7 5"><path d="M0.8 1 L3.5 3.8 L6.2 1" fill="none" stroke="#b5b5b5" stroke-width="0.8"/></svg>
<div class="a" style="left:368px;top:221px;width:76.6px;height:16.5px;background:#f2f2f3;border:1px solid #e4e4e6;border-radius:3px;"></div>
<div class="a" style="left:370.8px;top:223.5px;width:26.2px;height:11.5px;background:#e6e7e6;border-radius:2px;"></div>
<div class="t" style="left:370.8px;top:226.2px;width:26.2px;text-align:center;font-size:7px;color:#b8b8b8">email</div>
<div class="a" style="left:400.2px;top:223.5px;width:25.4px;height:11.5px;background:#e6e7e6;border-radius:2px;"></div>
<div class="t" style="left:400.2px;top:226.2px;width:25.4px;text-align:center;font-size:7px;color:#b8b8b8">+ 3 ...</div>
<svg class="a" style="left:431.9px;top:226.75px" width="7" height="5" viewBox="0 0 7 5"><path d="M0.8 1 L3.5 3.8 L6.2 1" fill="none" stroke="#b5b5b5" stroke-width="0.8"/></svg>
<svg class="a" style="left:453.5px;top:228px" width="8" height="3" viewBox="0 0 8 3"><circle cx="1.2" cy="1.5" r="0.7" fill="#888"/><circle cx="4" cy="1.5" r="0.7" fill="#888"/><circle cx="6.8" cy="1.5" r="0.7" fill="#888"/></svg>
<div class="a" style="left:258.3px;top:242.2px;width:24.5px;height:16.5px;background:#f2f2f3;border:1px solid #e4e4e6;border-radius:3px;"></div>
<div class="t" style="left:264.7px;top:247.73px;font-size:6.8px;color:#b0b0b0;">and</div>
<div class="a" style="left:288px;top:242.2px;width:75.5px;height:16.5px;background:#f2f2f3;border:1px solid #e4e4e6;border-radius:3px;"></div>
<div class="t" style="left:294px;top:247.65px;font-size:7px;color:#b5b5b5;">equals</div>
<svg class="a" style="left:351.5px;top:247.95px" width="7" height="5" viewBox="0 0 7 5"><path d="M0.8 1 L3.5 3.8 L6.2 1" fill="none" stroke="#b5b5b5" stroke-width="0.8"/></svg>
<div class="a" style="left:368.5px;top:242.2px;width:76.1px;height:16.5px;background:#fff;border:1px solid #e2e2e2;border-radius:3px;"></div>
<div class="t" style="left:374.9px;top:247.57px;font-size:7.2px;color:#333;">email</div>
<svg class="a" style="left:431.9px;top:247.95px" width="7" height="5" viewBox="0 0 7 5"><path d="M0.8 1 L3.5 3.8 L6.2 1" fill="none" stroke="#b5b5b5" stroke-width="0.8"/></svg>
<svg class="a" style="left:453.5px;top:249.2px" width="8" height="3" viewBox="0 0 8 3"><circle cx="1.2" cy="1.5" r="0.7" fill="#888"/><circle cx="4" cy="1.5" r="0.7" fill="#888"/><circle cx="6.8" cy="1.5" r="0.7" fill="#888"/></svg>
<svg class="a" style="left:258px;top:262.8px" width="51" height="17.2" viewBox="0 0 51 17.2"><rect x="0.9" y="0.9" width="49.2" height="15.4" rx="3" fill="#fff" stroke="#cfcfcf" stroke-width="0.8" stroke-dasharray="1.6 1.4"/></svg>
<div class="t" style="left:266.9px;top:268.31px;font-size:7px;color:#333;font-weight:bold;transform:scaleY(1.18);transform-origin:0 3.29px;-webkit-text-stroke:0.18px #333;">Add Filter</div>
</body></html>
